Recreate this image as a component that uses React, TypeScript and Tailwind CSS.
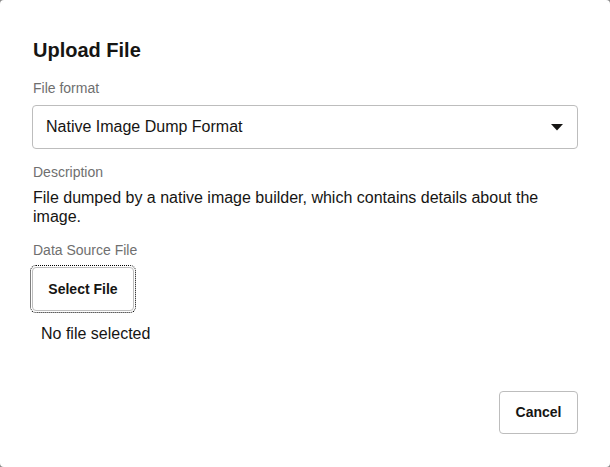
import React from 'react';

const font = { fontFamily: '"Liberation Sans", Arial, sans-serif' };

export default function App() {
  return (
    <div className="w-[610px] h-[467px] bg-[#8a8a8a]" style={font}>
      <div className="w-full h-full bg-white rounded-[4px] px-[32px] pt-[38px] flex flex-col text-[#161513]">
        <h2 className="text-[20px] leading-[24px] font-bold pl-px">Upload File</h2>

        <label className="mt-[16px] text-[14px] leading-[20px] text-[#6f6f6f] pl-px">File format</label>
        <div className="mt-[7px] h-[44px] border border-[#bdbdbd] rounded-[4px] flex items-center justify-between pl-[13px] pr-[14px]">
          <span className="text-[16px]">Native Image Dump Format</span>
          <svg width="12" height="7" viewBox="0 0 12 7">
            <path d="M0 0 L12 0 L6 6.5 Z" fill="#161513" />
          </svg>
        </div>

        <label className="mt-[13px] text-[14px] leading-[20px] text-[#6f6f6f] pl-px">Description</label>
        <p className="mt-[6px] text-[16px] leading-[19px] pl-px">
          File dumped by a native image builder, which contains details about the image.
        </p>

        <label className="mt-[14px] text-[14px] leading-[20px] text-[#6f6f6f] pl-px">Data Source File</label>
        <div className="mt-[7px]">
          <button className="w-[102px] h-[44px] border border-[#bdbdbd] rounded-[4px] bg-white text-[14px] font-bold outline outline-1 outline-dotted outline-black outline-offset-1">
            Select File
          </button>
        </div>
        <div className="mt-[13px] text-[16px] leading-[19px] pl-[9px]">No file selected</div>

        <div className="mt-auto mb-[33px] flex justify-end">
          <button className="w-[79px] h-[43px] border border-[#bdbdbd] rounded-[4px] bg-white text-[14px] font-bold">
            Cancel
          </button>
        </div>
      </div>
    </div>
  );
}
